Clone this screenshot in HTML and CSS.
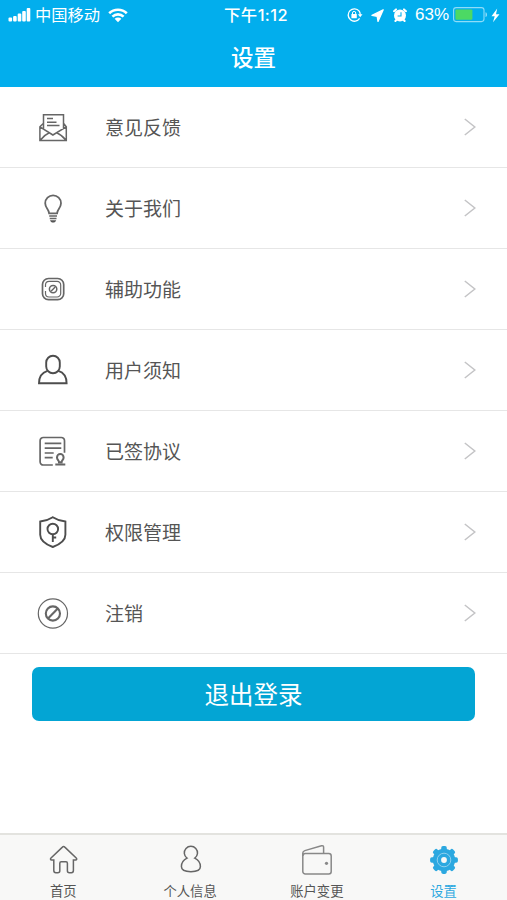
FILE: index.html
```html
<!DOCTYPE html>
<html lang="zh-CN">
<head>
    <meta charset="UTF-8">
    <meta name="viewport" content="width=device-width, initial-scale=1.0">
    <title>设置</title>
    <link rel="stylesheet" href="styles.css">
</head>
<body>
    <header class="header">
        <div class="status-bar">
            <div class="status-left">
                <svg class="signal" width="23" height="14" viewBox="0 0 23 14">
                    <rect x="0.5" y="9.5" width="3.6" height="4" rx="1"/>
                    <rect x="5.1" y="8" width="3.6" height="5.5" rx="1"/>
                    <rect x="9.7" y="5.5" width="3.6" height="8" rx="1"/>
                    <rect x="14.2" y="3" width="3.6" height="10.5" rx="1"/>
                    <rect x="18.7" y="0" width="3.6" height="13.5" rx="1"/>
                </svg>
                <span class="carrier">中国移动</span>
                <svg class="wifi" width="20" height="15" viewBox="0 0 20 15">
                    <path d="M1.2 5.2C6 .5 14 .5 18.8 5.2M4.4 8.6c3.2-3 8-3 11.2 0" fill="none" stroke="#fff" stroke-width="2.6"/>
                    <path d="M6.6 10.8c2-1.7 4.8-1.7 6.8 0L10 14.3z"/>
                </svg>
            </div>
            <div class="status-time">下午1:12</div>
            <div class="status-right">
                <svg class="lock" width="16" height="14" viewBox="0 0 16 14">
                    <path d="M12.2 3.1A6.2 6.2 0 1 0 12.6 10.4M12.2 3.1a6 6 0 0 1 1 3.6" fill="none" stroke="#fff" stroke-width="1.3"/>
                    <path d="M10.9 6.3h4.6l-2.3 2.9z"/>
                    <rect x="4.4" y="6" width="5.4" height="4.3" rx=".5"/>
                    <path d="M5.5 6.2V5a1.6 1.6 0 0 1 3.2 0v1.2" fill="none" stroke="#fff"/>
                </svg>
                <svg class="location" width="13" height="13" viewBox="0 0 13 13">
                    <path d="M12.2.8 1 6.4l5.2.9.8 5.200z" stroke="#fff" stroke-width="1.3" stroke-linejoin="round"/>
                </svg>
                <svg class="alarm" width="14" height="14" viewBox="0 0 14 14">
                    <circle cx="7" cy="7.6" r="6"/>
                    <path d="M1 3.2 3 1.4M13 3.2 11 1.4M3.4 11.8l-1 1.2M10.6 11.8l1 1.2" stroke="#fff" stroke-width="2" stroke-linecap="round"/>
                    <path d="M8 4.2V8H4.600" fill="none" stroke="#02aeed" stroke-width="1.1"/>
                </svg>
                <span class="percent">63%</span>
                <svg class="battery" width="35" height="16" viewBox="0 0 35 16">
                    <rect x=".6" y=".6" width="30.4" height="14" rx="2.5" fill="none" stroke="#8fdcf8" stroke-width="1.1"/>
                    <rect x="2.4" y="2.5" width="17" height="10.2" rx="1" fill="#4cd964"/>
                    <path d="M32.5 5.2c2 .6 2 4.2 0 4.8z" fill="#8fdcf8"/>
                </svg>
                <svg class="bolt" width="9" height="15" viewBox="0 0 9 15">
                    <path d="M6.2.5.5 8.2h3.2L2 14.3l6.5-8H5z"/>
                </svg>
            </div>
        </div>
        <h1 class="title">设置</h1>
    </header>

    <main class="content">
        <ul class="menu">
            <li class="menu-item">
                <svg class="menu-icon" viewBox="0 0 32 32">
                    <path d="M6.5 18V3.8h20V18M6.5 12.3 2.9 15.7V29.6h26.4V15.7l-2.8-3.4M2.9 15.9 15.9 24l13.3-8.1M3.2 29.3c3-4 5.7-6 9.1-7.5M29 29.3c-3-4-5.8-6-9.3-7.5M10 7.6h6M10 11.2h9.5M10 14.6h12.5"/>
                </svg>
                <span class="menu-text">意见反馈</span>
                <svg class="arrow" viewBox="0 0 12 18"><path d="M.8 1 10.8 9 .8 17"/></svg>
            </li>
            <li class="menu-item">
                <svg class="menu-icon" viewBox="0 0 32 32">
                    <path d="M12.1 21.3C12 17.2 8.2 16 8.2 11.3a7.9 7.9 0 0 1 15.8 0c0 4.7-3.8 5.9-3.9 10z" stroke-width="1.8"/>
                    <path d="M12.2 24h7.8M12.7 26.5h6.8" stroke-width="1.4"/>
                    <path d="M13 28.2h6.2c-.5 1.8-1.7 2.3-3.1 2.3s-2.6-.5-3.1-2.3z" fill="#555" stroke="none"/>
                </svg>
                <span class="menu-text">关于我们</span>
                <svg class="arrow" viewBox="0 0 12 18"><path d="M.8 1 10.8 9 .8 17"/></svg>
            </li>
            <li class="menu-item">
                <svg class="menu-icon" viewBox="0 0 32 32">
                    <rect x="5.5" y="5.5" width="21.2" height="21.2" rx="6" stroke-width="1.7"/>
                    <path d="M11.5 24H12a3.6 3.6 0 0 1-3.5-3.5V18M8.5 14v-2.3a3.6 3.6 0 0 1 3.6-3.4h8a3.6 3.6 0 0 1 3.6 3.6v8.5a3.6 3.6 0 0 1-3.6 3.6h-8.6" stroke-width="1.2"/>
                    <circle cx="16.1" cy="16.1" r="3.7"/>
                    <path d="M14 18.2l4.2-4.2" stroke-width="1.4"/>
                </svg>
                <span class="menu-text">辅助功能</span>
                <svg class="arrow" viewBox="0 0 12 18"><path d="M.8 1 10.8 9 .8 17"/></svg>
            </li>
            <li class="menu-item">
                <svg class="menu-icon dark" viewBox="0 0 32 32">
                    <rect x="9.2" y="1.8" width="13.6" height="17.4" rx="6.8"/>
                    <path d="M10.4 16.8C5 18.5 2 22.5 2 29.2h27.6c0-6.7-2.8-10.7-8.3-12.4"/>
                </svg>
                <span class="menu-text">用户须知</span>
                <svg class="arrow" viewBox="0 0 12 18"><path d="M.8 1 10.8 9 .8 17"/></svg>
            </li>
            <li class="menu-item">
                <svg class="menu-icon" viewBox="0 0 32 32">
                    <path d="M15.8 30H6.4a3.2 3.2 0 0 1-3.3-3.3V5.8a3.2 3.2 0 0 1 3.3-3.3h17.8a3.2 3.2 0 0 1 3.3 3.3v12" stroke-width="1.7"/>
                    <path d="M7.7 8.4h16.6M7.7 13.2h16.6M7.7 18h9M7.7 22.7h8" stroke-width="1.7"/>
                    <path d="M22 27.2c0-1.8-2-2.4-2-4.8a3.3 3.3 0 0 1 6.6 0c0 2.4-2 3-2 4.8zM18.3 29.5h10" stroke-width="2"/>
                </svg>
                <span class="menu-text">已签协议</span>
                <svg class="arrow" viewBox="0 0 12 18"><path d="M.8 1 10.8 9 .8 17"/></svg>
            </li>
            <li class="menu-item">
                <svg class="menu-icon dark" viewBox="0 0 32 32">
                    <path d="M15.8 1.2C12 3.6 8 5.1 3.2 5.5v13.2c0 6 5.8 9.7 12.6 12.3 6.8-2.6 12.6-6.3 12.6-12.3V5.5C23.6 5.1 19.6 3.6 15.8 1.2z"/>
                    <circle cx="15.8" cy="13" r="5.3"/>
                    <path d="M15.8 18.3V26M15.8 21.5h3.4"/>
                </svg>
                <span class="menu-text">权限管理</span>
                <svg class="arrow" viewBox="0 0 12 18"><path d="M.8 1 10.8 9 .8 17"/></svg>
            </li>
            <li class="menu-item">
                <svg class="menu-icon" viewBox="0 0 32 32">
                    <circle cx="15.9" cy="16.5" r="14.6" stroke-width="1.2"/>
                    <circle cx="15.9" cy="16.5" r="7.1" stroke-width="2.1"/>
                    <path d="M11 21.5l9.8-10" stroke-width="2.1"/>
                </svg>
                <span class="menu-text">注销</span>
                <svg class="arrow" viewBox="0 0 12 18"><path d="M.8 1 10.8 9 .8 17"/></svg>
            </li>
        </ul>
        <button class="logout">退出登录</button>
    </main>

    <nav class="tab-bar">
        <a class="tab">
            <svg class="tab-icon" viewBox="0 0 32 32">
                <path d="M16.6 2.5c-.5 0-.8.2-1.2.6L4 14c-1 1-.4 2 .6 2h2.2v10.6c0 1.6.6 2.2 2 2.2h2c1.4 0 2-.6 2-2v-7.6c0-1 .4-1.4 1.4-1.4h4.800c1 0 1.400.4 1.400 1.400v7.600c0 1.400.6 2 2 2h2c1.400 0 2-.6 2-2.200V16h2.200c1 0 1.600-1 .6-2L17.800 3.100c-.4-.4-.7-.6-1.200-.6z"/>
            </svg>
            <span>首页</span>
        </a>
        <a class="tab">
            <svg class="tab-icon" viewBox="0 0 32 32">
                <path d="M13 14.2a6.6 6.6 0 1 1 7.8 0c3.4 1.7 5.6 5.4 5.6 8.4 0 3.6-3.7 5.1-9.5 5.1s-9.5-1.5-9.500-5.100c0-3 2.200-6.700 5.600-8.400z"/>
            </svg>
            <span>个人信息</span>
        </a>
        <a class="tab">
            <svg class="tab-icon wallet" viewBox="0 0 32 32">
                <rect x="1.8" y="9.5" width="28.4" height="20.5" rx="2.5"/>
                <path d="M1.8 12V9c0-1.4.6-2 2-2.4L20.5 1.8c1.3-.3 2.1.2 2.1 1.5v6"/>
                <circle cx="25.5" cy="19.3" r="1.6" fill="#888" stroke="none"/>
            </svg>
            <span>账户变更</span>
        </a>
        <a class="tab active">
            <svg class="tab-icon gear" viewBox="-16 -16 32 32">
                <circle r="11.2"/>
                <rect x="-2.8" y="-13.9" width="5.6" height="27.8" rx="1.8"/>
                <rect x="-2.8" y="-13.9" width="5.6" height="27.8" rx="1.8" transform="rotate(45)"/>
                <rect x="-2.8" y="-13.9" width="5.6" height="27.8" rx="1.8" transform="rotate(90)"/>
                <rect x="-2.8" y="-13.9" width="5.6" height="27.8" rx="1.8" transform="rotate(135)"/>
                <circle r="6.8" fill="none" stroke="#8fd0ef" stroke-width="1"/>
                <circle r="2.9" fill="#f8f8f7"/>
            </svg>
            <span>设置</span>
        </a>
    </nav>
</body>
</html>
```
FILE: styles.css
```css
* { box-sizing: border-box; margin: 0; padding: 0; }
html, body { height: 100%; }
body {
    display: flex;
    flex-direction: column;
    overflow: hidden;
    background: #fff;
    color: #555;
    font-family: "Liberation Sans", "Noto Sans CJK SC", sans-serif;
}
svg { display: block; flex: none; }

/* header */
.header { height: 87px; flex: none; background: #02aeed; color: #fff; }
.status-bar {
    display: grid;
    grid-template-columns: 1fr auto 1fr;
    align-items: center;
    height: 30px;
    padding: 0 7px 0 8px;
    font-size: 16px;
    line-height: 30px;
}
.status-bar svg { fill: #fff; }
.status-left, .status-right { display: flex; align-items: center; }
.status-right { justify-content: flex-end; }
.carrier { margin: 0 8px 0 4px; font-size: 16.3px; }
.status-time { padding-left: 4px; font-family: Inter, "Noto Sans CJK SC", sans-serif; font-size: 16.4px; font-weight: 500; letter-spacing: 0.4px; }
.lock { margin-right: 8px; }
.location { margin-right: 9px; }
.alarm { margin-right: 8px; }
.percent { margin-right: 4px; font-size: 17px; }
.battery { margin-right: 3px; }
.title { height: 57px; font-size: 22.5px; font-weight: 500; line-height: 58px; text-align: center; }

/* menu */
.content { flex: 1; }
.menu { list-style: none; }
.menu-item {
    display: flex;
    align-items: center;
    height: 81px;
    padding: 0 31px 0 37px;
    border-bottom: 1px solid #e6e6e6;
}
.menu-icon { width: 32px; height: 32px; fill: none; stroke: #666; stroke-width: 1.5; }
.menu-icon.dark { stroke: #4d4d4d; stroke-width: 1.9; }
.menu-text { flex: 1; margin-left: 36px; padding-bottom: 2px; font-size: 19px; }
.arrow { width: 12px; height: 18px; fill: none; stroke: #c4c4c6; stroke-width: 1.5; }
.logout {
    display: block;
    width: 443px;
    height: 54px;
    margin: 13px auto 0;
    padding-bottom: 2px;
    border: 0;
    border-radius: 7px;
    background: #03a5d4;
    color: #fff;
    font-family: inherit;
    font-size: 24.5px;
}

/* tab bar */
.tab-bar {
    display: flex;
    flex: none;
    height: 67px;
    border-top: 2px solid #e3e3df;
    background: #f8f8f7;
}
.tab { display: flex; flex: 1; flex-direction: column; align-items: center; padding-top: 9px; font-size: 13.3px; line-height: 20px; }
.tab span { margin-top: 6px; }
.tab-icon { width: 32px; height: 32px; fill: none; stroke: #666; stroke-width: 1.5; }
.tab-icon.wallet { stroke: #888; }
.tab-icon.gear { fill: #2ca8e0; stroke: none; }
.tab.active { color: #2ca8e0; }
```
